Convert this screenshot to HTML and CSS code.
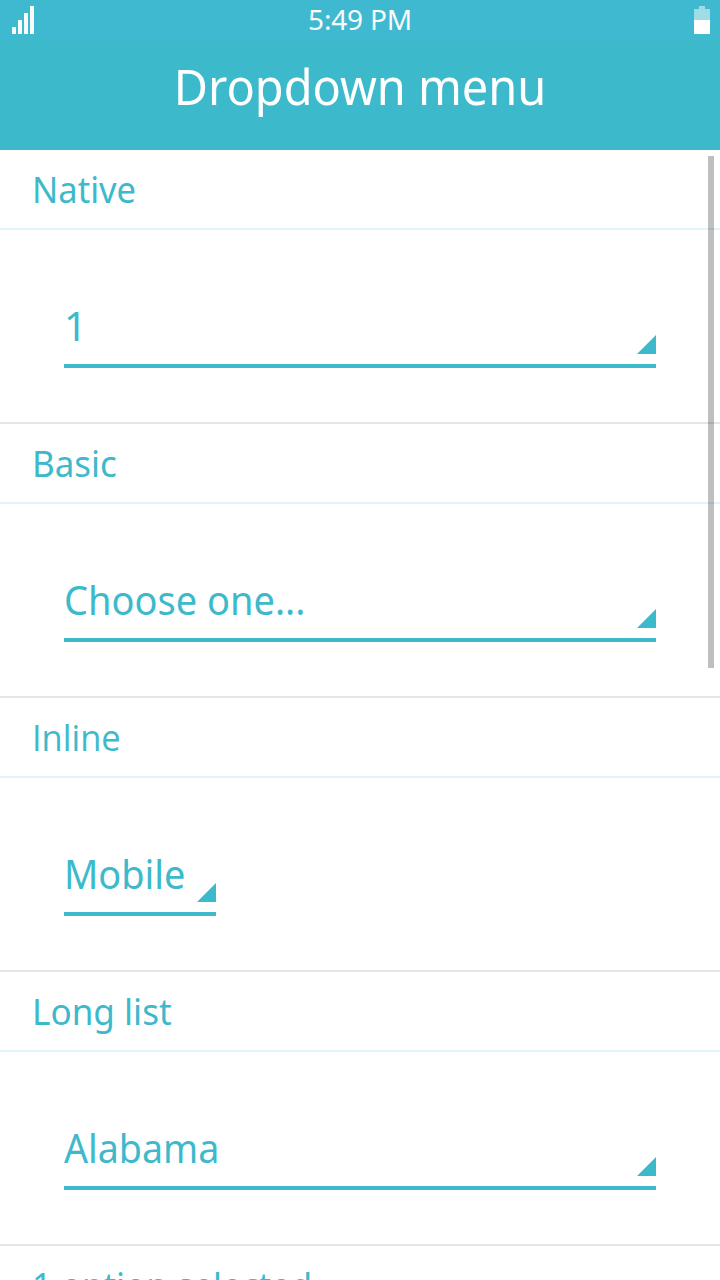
FILE: index.html
```html
<!DOCTYPE html>
<html lang="en">
<head>
<meta charset="utf-8">
<title>Dropdown menu</title>
<link rel="stylesheet" href="styles.css">
</head>
<body>
<div class="screen">
  <header class="header">
    <div class="status">
      <svg class="signal" width="22" height="28" viewBox="0 0 22 28" fill="#fafafa"><path d="M0 21h4v7H0zM6 14h4v14H6zM12 7h4v21h-4zM18 0h4v28h-4z"/></svg>
      <span class="clock">5:49 PM</span>
      <svg class="battery" width="16" height="28" viewBox="0 0 16 28"><path fill="#9fdce6" d="M5 0h6v3h5v11H0V3h5z"/><path fill="#fff" d="M0 14h16v14H0z"/></svg>
    </div>
    <h1 class="title">Dropdown menu</h1>
  </header>
  <main class="content">
    <h2 class="divider"><span class="label native">Native</span></h2>
    <div class="item"><div class="dropdown"><span class="value one">1</span><svg class="arrow" width="19" height="19" viewBox="0 0 19 19"><path d="M19 0v19H0z"/></svg></div></div>
    <h2 class="divider"><span class="label basic">Basic</span></h2>
    <div class="item"><div class="dropdown"><span class="value choose">Choose one...</span><svg class="arrow" width="19" height="19" viewBox="0 0 19 19"><path d="M19 0v19H0z"/></svg></div></div>
    <h2 class="divider"><span class="label inline">Inline</span></h2>
    <div class="item"><div class="dropdown compact"><span class="value mobile">Mobile</span><svg class="arrow" width="19" height="19" viewBox="0 0 19 19"><path d="M19 0v19H0z"/></svg></div></div>
    <h2 class="divider"><span class="label long">Long list</span></h2>
    <div class="item"><div class="dropdown"><span class="value alabama">Alabama</span><svg class="arrow" width="19" height="19" viewBox="0 0 19 19"><path d="M19 0v19H0z"/></svg></div></div>
    <h2 class="divider"><span class="label selected">1 option selected</span></h2>
  </main>
  <div class="scrollbar"></div>
</div>
</body>
</html>
```
FILE: styles.css
```css
* { box-sizing: border-box; }
body { margin: 0; font-family: "Noto Sans", "Open Sans", sans-serif; background: #fff; color: #3db9cc; }
.screen { position: relative; width: 720px; height: 1280px; overflow: hidden; }
.header { height: 150px; background: #3db9cc; color: #fff; }
.status { display: grid; grid-template-columns: 1fr auto 1fr; align-items: center; height: 40px; padding: 0 10px; background: #3fb9cf; }
.signal { margin-left: 2px; }
.battery { justify-self: end; }
.clock { margin-bottom: 2px; font-size: 28px; line-height: 38px; letter-spacing: -0.2px; color: #fafafa; }
.title { margin: 0; font-size: 50px; line-height: 92px; font-weight: 400; text-align: center; transform: scaleX(0.938); }
.divider { margin: 0; height: 80px; padding: 1px 32px 0; border-bottom: 2px solid #e2f4f9; font-size: 36px; line-height: 78px; font-weight: 400; white-space: nowrap; }
.label { display: inline-block; transform-origin: left center; }
.native { transform: scaleX(0.96); }
.basic { transform: scaleX(0.97); }
.inline { font-family: "Open Sans", "Noto Sans", sans-serif; transform: scaleX(0.957); }
.long { transform: scaleX(0.975); }
.selected { transform: scaleX(0.968); }
.item { height: 194px; padding: 56px 64px 0; border-bottom: 2px solid #e5e5e5; }
.dropdown { display: flex; justify-content: space-between; align-items: flex-end; height: 82px; padding-bottom: 10px; border-bottom: 4px solid #3db9cc; }
.compact { width: 152px; }
.value { font-size: 40px; line-height: 54px; margin-bottom: 1px; white-space: nowrap; transform-origin: left center; }
.choose { transform: scaleX(0.95); }
.mobile { transform: scaleX(0.947); }
.alabama { transform: scaleX(0.94); }
.arrow { flex: none; fill: #3db9cc; }
.scrollbar { position: absolute; top: 156px; right: 6px; width: 6px; height: 512px; background: rgba(0, 0, 0, 0.25); }
```
